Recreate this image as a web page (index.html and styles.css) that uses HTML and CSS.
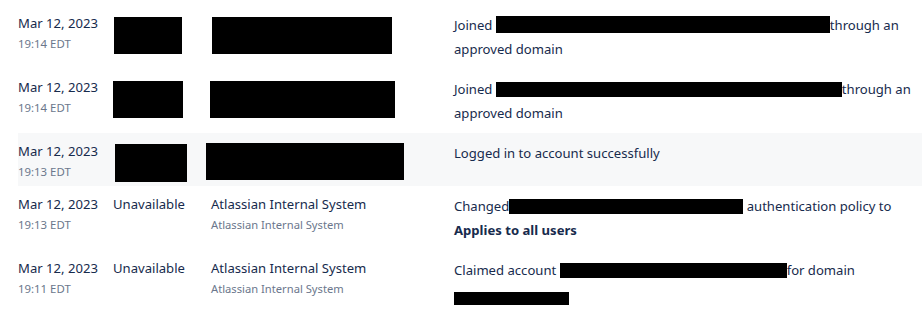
FILE: index.html
```html
<!DOCTYPE html>
<html>
<head>
  <meta charset="UTF-8">
  <title>Audit log</title>
  <link rel="stylesheet" href="styles.css">
</head>
<body>

  <div class="log">

    <div class="row">
      <div class="when">
        <div class="date">Mar 12, 2023</div>
        <div class="time">19:14 EDT</div>
      </div>
      <div class="who"><span class="hidden w68"></span></div>
      <div class="actor"><span class="hidden w180"></span></div>
      <div class="what">Joined <span class="mask w334"></span>through an approved domain</div>
    </div>

    <div class="row">
      <div class="when">
        <div class="date">Mar 12, 2023</div>
        <div class="time">19:14 EDT</div>
      </div>
      <div class="who"><span class="hidden w70 shift"></span></div>
      <div class="actor"><span class="hidden w185 shift2"></span></div>
      <div class="what">Joined <span class="mask w346"></span>through an approved domain</div>
    </div>

    <div class="row active">
      <div class="when">
        <div class="date">Mar 12, 2023</div>
        <div class="time">19:13 EDT</div>
      </div>
      <div class="who"><span class="hidden w72 shift3"></span></div>
      <div class="actor"><span class="hidden w198 shift4"></span></div>
      <div class="what">Logged in to account successfully</div>
    </div>

    <div class="row">
      <div class="when">
        <div class="date">Mar 12, 2023</div>
        <div class="time">19:13 EDT</div>
      </div>
      <div class="who">Unavailable</div>
      <div class="actor">
        <div class="name">Atlassian Internal System</div>
        <div class="sub">Atlassian Internal System</div>
      </div>
      <div class="what">Changed<span class="mask w234"></span> authentication policy to <b>Applies to all users</b></div>
    </div>

    <div class="row">
      <div class="when">
        <div class="date">Mar 12, 2023</div>
        <div class="time">19:11 EDT</div>
      </div>
      <div class="who">Unavailable</div>
      <div class="actor">
        <div class="name">Atlassian Internal System</div>
        <div class="sub">Atlassian Internal System</div>
      </div>
      <div class="what">Claimed account <span class="mask w227"></span>for domain <span class="mask w115"></span></div>
    </div>

  </div>

</body>
</html>
```

FILE: styles.css
```css
* {
  box-sizing: border-box;
  margin: 0;
  padding: 0;
}

body {
  font-family: 'Noto Sans', sans-serif;
  font-size: 13.1px;
  color: #172b4d;
  background-color: #fff;
  padding: 5px 0 0 18px;
}

.row {
  display: grid;
  grid-template-columns: 95px 98px 243px 1fr;
  padding: 8px 0;
  height: 64px;
}

.row.active {
  background-color: #f7f8f9;
  height: 53px;
}

.date {
  line-height: 20px;
}

.time {
  font-size: 11.4px;
  line-height: 17px;
  margin-top: 2px;
  color: #6b778c;
}

.who,
.name {
  line-height: 20px;
}

.sub {
  font-size: 11.2px;
  line-height: 17px;
  margin-top: 2px;
  color: #6b778c;
}

.what {
  line-height: 24px;
}

.what b {
  font-weight: 700;
}

/* redacted bits */
.hidden {
  display: block;
  height: 37px;
  margin-top: 4px;
  background-color: #000;
}

.hidden.shift { margin-left: 0; }
.hidden.shift2 { margin-left: -1px; }
.hidden.shift3 { margin-left: 2px; margin-top: 3px; height: 38px; }
.hidden.shift4 { margin-left: -5px; margin-top: 2px; }

.mask {
  display: inline-block;
  height: 15px;
  vertical-align: -3px;
  background-color: #000;
}

.w68 { width: 68px; margin-left: 1px; }
.w70 { width: 70px; }
.w72 { width: 72px; }
.w180 { width: 180px; margin-left: 1px; }
.w185 { width: 185px; }
.w198 { width: 198px; }
.w334 { width: 334px; height: 17px; }
.w346 { width: 346px; }
.w234 { width: 234px; }
.w227 { width: 227px; }
.w115 { width: 115px; height: 13px; vertical-align: -6px; }
```
